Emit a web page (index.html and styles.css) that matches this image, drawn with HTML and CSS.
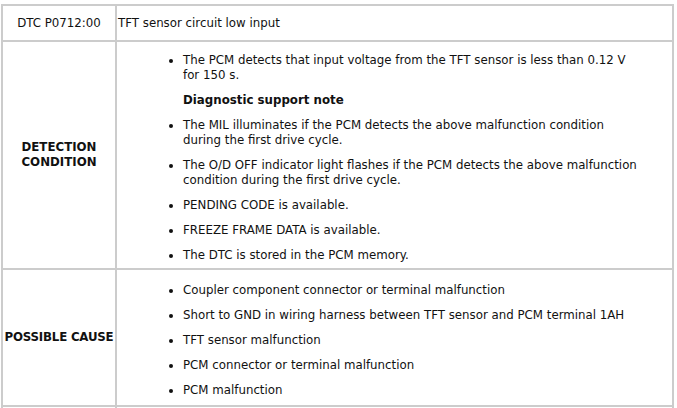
FILE: index.html
```html
<!DOCTYPE html>
<html>
<head>
<meta charset="utf-8">
<link rel="stylesheet" href="styles.css">
</head>
<body>
<table class="dtc">
  <tr class="r-head">
    <td class="label plain">DTC P0712:00</td>
    <td class="desc">TFT sensor circuit low input</td>
  </tr>
  <tr>
    <td class="label">DETECTION<br>CONDITION</td>
    <td class="desc">
      <ul class="items">
        <li>The PCM detects that input voltage from the TFT sensor is less than 0.12 V for 150 s.</li>
        <li class="note">Diagnostic support note</li>
        <li>The MIL illuminates if the PCM detects the above malfunction condition during the first drive cycle.</li>
        <li>The O/D OFF indicator light flashes if the PCM detects the above malfunction condition during the first drive cycle.</li>
        <li>PENDING CODE is available.</li>
        <li>FREEZE FRAME DATA is available.</li>
        <li>The DTC is stored in the PCM memory.</li>
      </ul>
    </td>
  </tr>
  <tr>
    <td class="label nowrap">POSSIBLE CAUSE</td>
    <td class="desc">
      <ul class="items causes">
        <li>Coupler component connector or terminal malfunction</li>
        <li>Short to GND in wiring harness between TFT sensor and PCM terminal 1AH</li>
        <li>TFT sensor malfunction</li>
        <li>PCM connector or terminal malfunction</li>
        <li>PCM malfunction</li>
      </ul>
    </td>
  </tr>
  <tr class="r-tail">
    <td class="label"></td>
    <td class="desc"></td>
  </tr>
</table>
</body>
</html>
```

FILE: styles.css
```css
html, body {
  margin: 0;
  padding: 0;
  background: #ffffff;
}

body {
  padding: 4px 0 0 1px;
  font-family: "DejaVu Sans", Verdana, sans-serif;
  font-size: 11.8px;
  line-height: 15px;
  color: #111111;
}

.dtc {
  border-collapse: collapse;
  width: 673px;
}

.dtc td {
  border: 2px solid #cccccc;
  padding: 1px;
  vertical-align: middle;
}

.r-head td {
  height: 32px;
}

.label {
  width: 110px;
  text-align: center;
  font-weight: bold;
}

.label.plain {
  font-weight: normal;
}

.nowrap {
  white-space: nowrap;
  letter-spacing: -0.2px;
}

.desc {
  text-align: left;
}

.items {
  margin: 0;
  padding: 0 30px 4px 65px;
}

.items.causes {
  padding-top: 2px;
  padding-bottom: 6px;
}

.items li {
  margin-top: 10px;
}

.items li.note {
  list-style: none;
  font-weight: bold;
}

.dtc .r-tail td {
  height: 1px;
  padding: 0;
  border-bottom: 0;
}
```
